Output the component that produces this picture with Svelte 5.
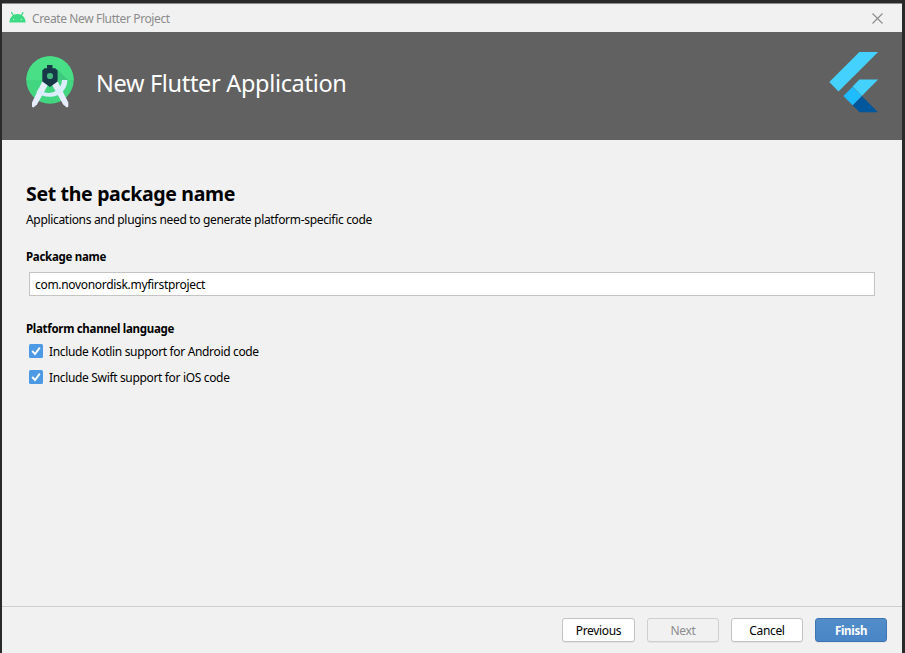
<script>
  let packageName = $state('com.novonordisk.myfirstproject');
  let options = $state([
    { id: 'kotlin', label: 'Include Kotlin support for Android code', checked: true },
    { id: 'swift', label: 'Include Swift support for iOS code', checked: true }
  ]);
</script>

<div class="backdrop">
  <div class="window">
    <div class="titlebar">
      <svg class="android" width="17" height="11" viewBox="0 0 17 11">
        <path d="M2.6 0.6 L4.8 4 M14 0.6 L12 4" stroke="#3ddc84" stroke-width="1.2" stroke-linecap="round" />
        <path d="M0.3 10.6 C0.6 5.2 4 1.9 8.5 1.9 S16.4 5.2 16.7 10.6 Z" fill="#3ddc84" />
        <circle cx="4.7" cy="7.5" r="0.55" fill="#fff" />
        <circle cx="12.3" cy="7.5" r="0.55" fill="#fff" />
      </svg>
      <span class="caption">Create New Flutter Project</span>
      <svg class="close" width="11" height="11" viewBox="0 0 11 11">
        <path d="M0.5 0.5 L10.5 10.5 M10.5 0.5 L0.5 10.5" stroke="#8a8a8a" stroke-width="1.1" />
      </svg>
    </div>

    <header>
      <svg class="studio" width="48" height="54" viewBox="0 0 48 54">
        <defs>
          <clipPath id="disc"><circle cx="24" cy="24" r="23.7" /></clipPath>
        </defs>
        <g clip-path="url(#disc)">
          <rect width="48" height="48" fill="#43d681" />
          <rect width="48" height="24" fill="#49df87" />
          <path d="M31 13 L42 24 H31 Z" fill="#36bd74" opacity="0.6" />
        </g>
        <path d="M17 24 L6 46.5 V50.8 L7.4 51.4 L11 48.5 L23 27 Z" fill="#e6edfb" />
        <path d="M31 24 L42.3 46.5 V50.8 L40.8 51.4 L37.2 48.5 L25 27 Z" fill="#e6edfb" />
        <path d="M12.5 32.5 C17.5 37.5 25 38.5 30.5 34.5 C34.5 31.8 35.8 28 36 24 H41.4 C41.2 33.5 34 40.8 24 40.8 C18 40.8 13.5 38.7 10.5 36.2 Z" fill="#d9eefa" />
        <path d="M21 9 H26.5 V12.3 H29.3 L31.6 14.5 V25.5 L24 31 L16.3 25.5 V14.5 L18.5 12.3 H21 Z" fill="#163847" />
        <circle cx="24" cy="20" r="3.1" fill="#43b67c" />
      </svg>
      <h1>New Flutter Application</h1>
      <svg class="flutter" width="50" height="61" viewBox="0 0 50 61">
        <path d="M30.4 0 H49.1 L9.5 39.4 L0.3 30 Z" fill="#45d1fd" />
        <path d="M30.4 27.5 H49.1 L32.8 44 L23.6 34.6 Z" fill="#45d1fd" />
        <path d="M23.6 53.2 L32.8 44 L49.1 60.3 H30.6 Z" fill="#01579b" />
        <path d="M23.6 34.8 L32.8 44 L23.6 53.2 L14.4 44 Z" fill="#1fbcfd" />
      </svg>
    </header>

    <main>
      <h2>Set the package name</h2>
      <p class="desc">Applications and plugins need to generate platform-specific code</p>
      <label class="field-label package" for="package">Package name</label>
      <input id="package" class="text-field" type="text" spellcheck="false" bind:value={packageName} />
      <div class="field-label platform">Platform channel language</div>
      {#each options as option (option.id)}
        <label class="option">
          <input type="checkbox" bind:checked={option.checked} />
          <svg class="box" width="14" height="14" viewBox="0 0 14 14">
            <rect width="14" height="14" rx="1.5" fill="#4d9ae4" />
            {#if option.checked}
              <path d="M3.2 7 L6 10 L10.8 3.6" fill="none" stroke="#fff" stroke-width="1.9" />
            {/if}
          </svg>
          <span>{option.label}</span>
        </label>
      {/each}
    </main>

    <footer>
      <button class="previous">Previous</button>
      <button class="next" disabled>Next</button>
      <button class="cancel">Cancel</button>
      <button class="finish">Finish</button>
    </footer>
  </div>
</div>

<style>
  .backdrop {
    box-sizing: border-box;
    width: 905px;
    height: 653px;
    padding: 3px 3px 0 2px;
    background: #2a2a2a;
    overflow: hidden;
    font-family: 'Noto Sans', 'Open Sans', sans-serif;
    font-size: 12px;
    color: #000;
  }
  .window {
    box-sizing: border-box;
    height: 650px;
    display: flex;
    flex-direction: column;
    background: #f1f1f1;
    border-top: 1px solid #8c8c8c;
  }
  .titlebar {
    height: 28px;
    flex: none;
    display: flex;
    align-items: center;
    padding: 0 19px 0 7px;
  }
  .android { margin-top: -1px; }
  .caption {
    margin-left: 6px;
    margin-top: 2px;
    color: #8b8b8b;
    line-height: 16px;
    letter-spacing: -0.38px;
    white-space: nowrap;
  }
  .close { margin-left: auto; }
  header {
    height: 108px;
    flex: none;
    box-sizing: border-box;
    display: flex;
    align-items: flex-start;
    padding: 20px 23px 0 24px;
    background: #616161;
  }
  .studio { margin-top: 4px; }
  h1 {
    margin: 14px 0 0 22px;
    color: #fff;
    font-size: 23.5px;
    line-height: 34px;
    font-weight: 400;
    letter-spacing: -0.32px;
    white-space: nowrap;
  }
  .flutter { margin-left: auto; }
  main {
    flex: 1;
    display: flex;
    flex-direction: column;
    align-items: flex-start;
    padding: 40px 24px 0;
    line-height: 16px;
    white-space: nowrap;
  }
  h2 {
    margin: 0;
    font-size: 19.5px;
    line-height: 28px;
    font-weight: 700;
    letter-spacing: -0.33px;
  }
  .desc { margin: 4px 0 0; letter-spacing: -0.32px; }
  .field-label { font-size: 11.5px; font-weight: 700; letter-spacing: -0.3px; }
  .package { margin-top: 21px; }
  .platform { margin-top: 25px; }
  .text-field {
    box-sizing: border-box;
    width: 846px;
    height: 24px;
    margin: 7px 0 0 3px;
    padding: 1px 5px 0;
    border: 1px solid #c4c4c4;
    background: #fff;
    font: inherit;
    letter-spacing: -0.31px;
    outline: none;
  }
  .option {
    display: flex;
    align-items: center;
    gap: 6px;
    height: 16px;
    margin: 7px 0 0 3px;
    letter-spacing: -0.34px;
  }
  .option + .option { margin-top: 10px; }
  .option input { display: none; }
  .box { margin-top: -2px; }
  footer {
    box-sizing: border-box;
    height: 47px;
    flex: none;
    display: flex;
    gap: 12px;
    justify-content: flex-end;
    padding: 11px 15px 0;
    border-top: 1px solid #cdd0d0;
  }
  button {
    box-sizing: border-box;
    width: 72px;
    height: 24px;
    padding: 2px 0 0;
    border: 1px solid #c2c2c2;
    border-radius: 3px;
    background: #fff;
    color: #000;
    font-family: inherit;
    font-size: 12px;
    line-height: 20px;
    letter-spacing: -0.35px;
    box-shadow: 0 1px 0 #e4e4e4;
  }
  .previous { width: 73px; }
  .next { background: #f1f1f1; border-color: #cfcfcf; color: #8c8c8c; }
  .finish {
    background: linear-gradient(#528cc9, #4986c7);
    border-color: #3d75b2;
    color: #fff;
    font-weight: 700;
    font-size: 11.5px;
    letter-spacing: -0.3px;
  }
</style>
